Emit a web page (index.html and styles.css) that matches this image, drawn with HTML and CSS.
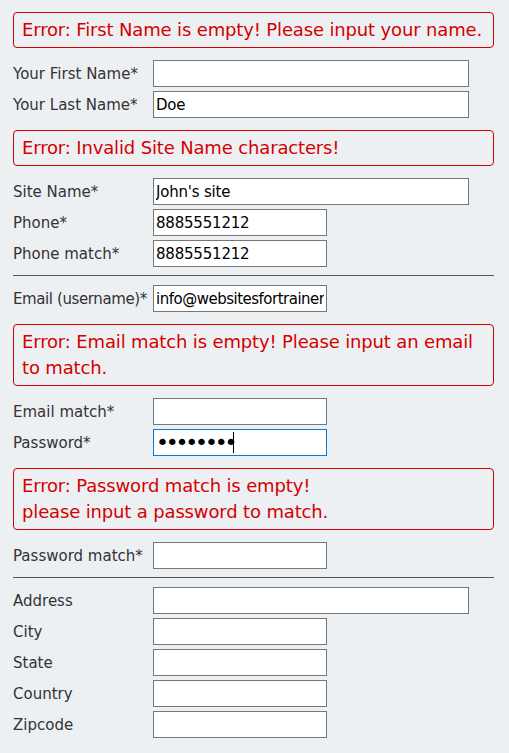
FILE: index.html
```html
<!DOCTYPE html>
<html lang="en">
<head>
  <meta charset="UTF-8" />
  <meta name="viewport" content="width=device-width, initial-scale=1.0"/>
  <title>Sign Up</title>
  <link rel="stylesheet" href="styles.css">
</head>
<body>
  <form class="signup">
    <div class="error">Error: First Name is empty! Please input your name.</div>
    <div class="rows">
      <label class="row"><span>Your First Name*</span><input class="wide" type="text" value=""></label>
      <label class="row"><span>Your Last Name*</span><input class="wide" type="text" value="Doe"></label>
    </div>

    <div class="error">Error: Invalid Site Name characters!</div>
    <div class="rows">
      <label class="row"><span>Site Name*</span><input class="wide" type="text" value="John's site"></label>
      <label class="row"><span>Phone*</span><input type="text" value="8885551212"></label>
      <label class="row"><span>Phone match*</span><input type="text" value="8885551212"></label>
    </div>

    <hr>

    <div class="rows">
      <label class="row"><span class="tight">Email (username)*</span><input class="email" type="text" value="info@websitesfortrainers.com"></label>
    </div>

    <div class="error">Error: Email match is empty! Please input an email to match.</div>
    <div class="rows">
      <label class="row"><span>Email match*</span><input type="text" value=""></label>
      <label class="row"><span>Password*</span><input class="focused" type="password" value="secret12"><i class="caret"></i></label>
    </div>

    <div class="error">Error: Password match is empty!<br>please input a password to match.</div>
    <div class="rows">
      <label class="row"><span>Password match*</span><input type="password" value=""></label>
    </div>

    <hr>

    <div class="rows">
      <label class="row"><span>Address</span><input class="wide" type="text"></label>
      <label class="row"><span>City</span><input type="text"></label>
      <label class="row"><span>State</span><input type="text"></label>
      <label class="row"><span>Country</span><input type="text"></label>
      <label class="row"><span>Zipcode</span><input type="text"></label>
    </div>
  </form>
</body>
</html>
```

FILE: styles.css
```css
body {
  background: #edf0f3;
  color: #333;
  font-family: "DejaVu Sans", Verdana, sans-serif;
  margin: 0;
  padding: 12px 15px 0 13px;
}

.signup {
  width: 481px;
}

.error {
  border: 1px solid #d40000;
  border-radius: 4px;
  color: #d40000;
  font-size: 18px;
  letter-spacing: -0.15px;
  line-height: 26px;
  padding: 4px 4px 4px 8px;
  margin-bottom: 12px;
}

.rows {
  display: flex;
  flex-direction: column;
  gap: 4px;
  margin-bottom: 12px;
}

.row {
  display: flex;
  align-items: center;
  position: relative;
}

.row span {
  flex: 0 0 140px;
  white-space: nowrap;
  font-size: 15px;
}

.row span.tight {
  letter-spacing: -0.4px;
}

input {
  box-sizing: border-box;
  width: 174px;
  height: 27px;
  margin: 0;
  padding: 0 2px;
  border: 1px solid #777;
  background: #fff;
  color: #000;
  font-family: "DejaVu Sans", Verdana, sans-serif;
  font-size: 15px;
  letter-spacing: -0.2px;
  outline: none;
}

input.wide {
  width: 316px;
}

input.email {
  letter-spacing: -0.5px;
}

input.focused {
  border-color: #0a78d7;
  font-size: 22px;
  letter-spacing: -3.2px;
}

.caret {
  position: absolute;
  left: 220px;
  top: 3px;
  width: 1px;
  height: 21px;
  background: #000;
}

hr {
  border: none;
  border-top: 1px solid #555;
  margin: -4px 0 9px;
}
```
